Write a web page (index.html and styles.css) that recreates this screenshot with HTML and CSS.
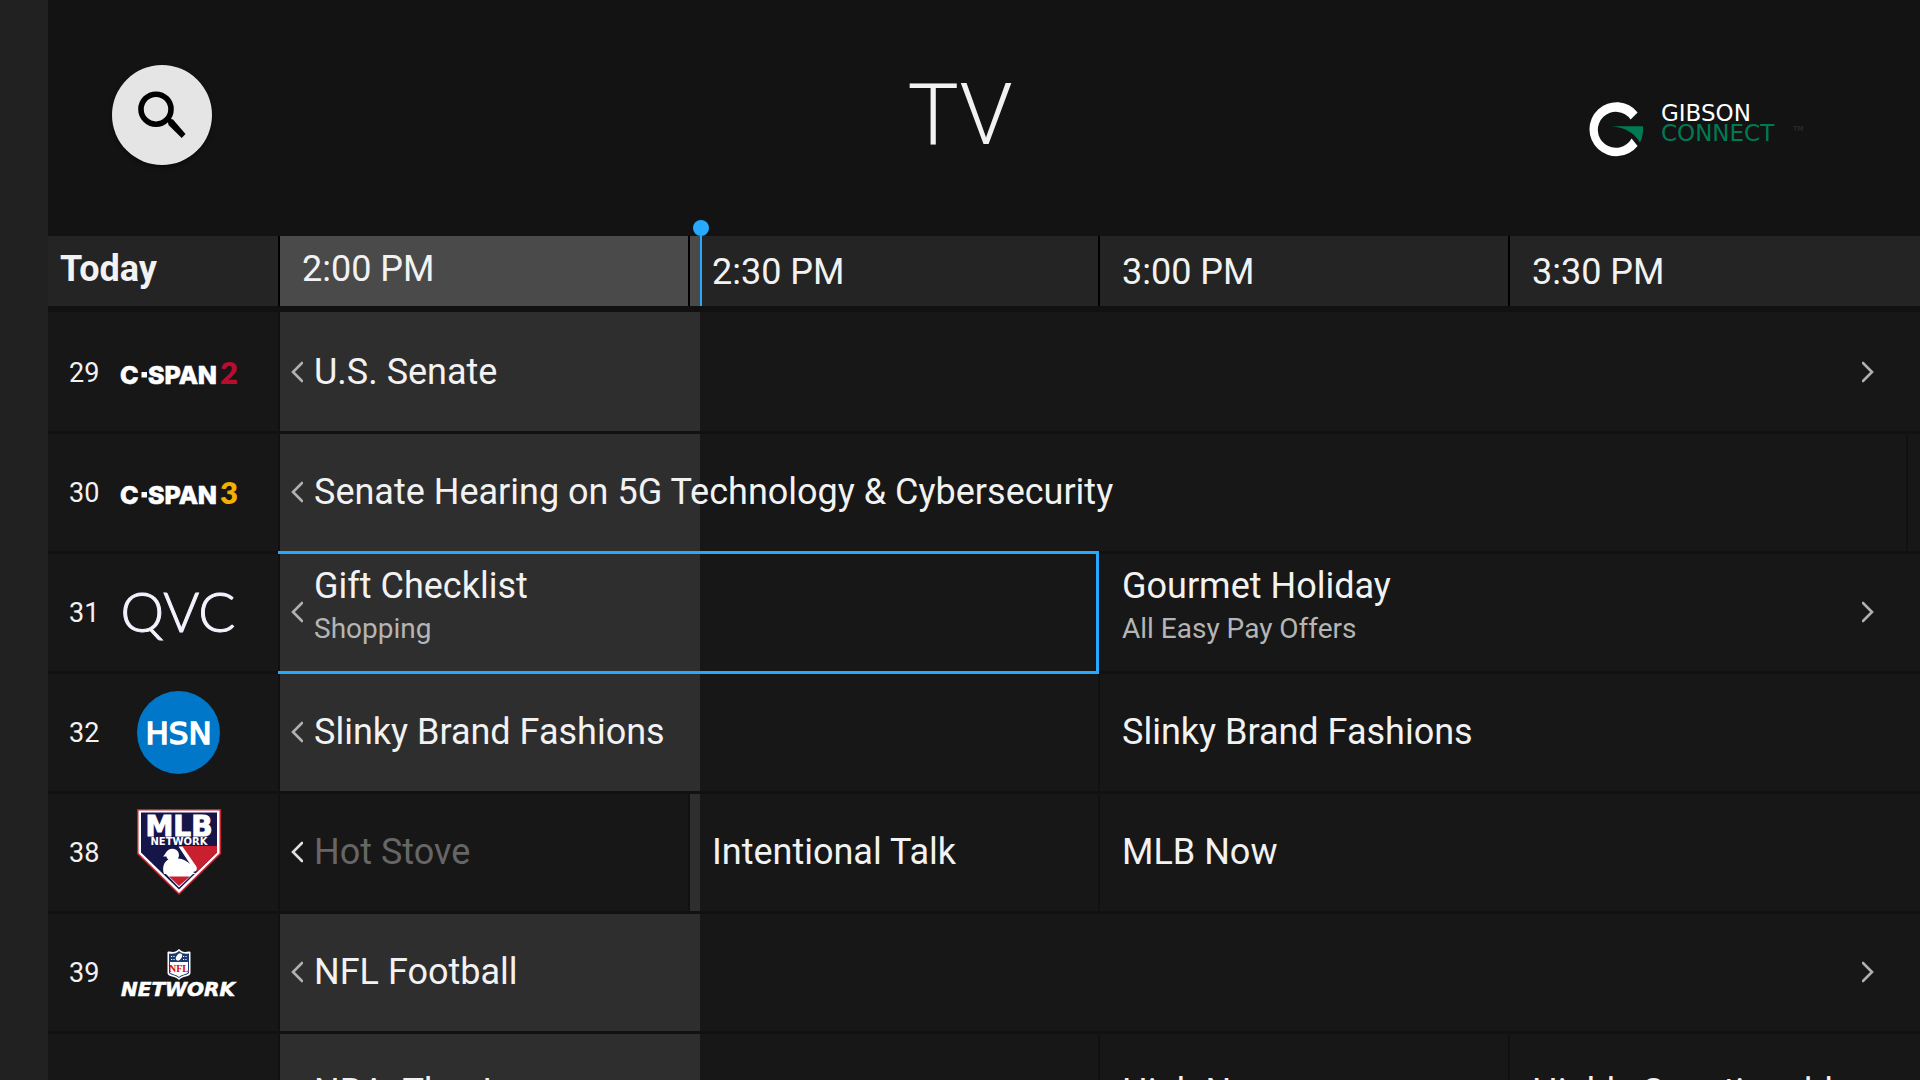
FILE: index.html
```html
<!DOCTYPE html>
<html lang="en">
<head>
    <meta charset="utf-8">
    <title>TV Guide</title>
    <link rel="stylesheet" href="styles.css">
</head>
<body>
    <svg class="sprite" aria-hidden="true">
        <symbol id="chevron-left" viewBox="0 0 12 22">
            <path d="M11 2 L2 11 L11 20" fill="none" stroke="currentColor" stroke-width="2.6" stroke-linecap="round"/>
        </symbol>
        <symbol id="chevron-right" viewBox="0 0 12 22">
            <path d="M1 2 L10 11 L1 20" fill="none" stroke="currentColor" stroke-width="2.6" stroke-linecap="round"/>
        </symbol>
    </svg>

    <div class="app">
        <nav class="side-rail" aria-label="Menu"></nav>

        <main class="main">
            <!-- Header -->
            <header class="header">
                <button class="search-button" aria-label="Search">
                    <svg width="100" height="100" viewBox="0 0 100 100">
                        <circle cx="44" cy="44.2" r="15" fill="none" stroke="#000" stroke-width="5.6"/>
                        <path d="M55.500 55 L57.500 53.500 L61 54.500 L73.500 69 L69.700 73 L56.500 60 Z" fill="#000"/>
                    </svg>
                </button>
                <h1 class="title">TV</h1>
                <svg class="brand" width="220" height="100" viewBox="0 0 220 100" role="img" aria-label="Gibson Connect">
                    <path d="M49.6 47.4 A27 27 0 1 0 49.6 81 L43.6 73.5 A18 18 0 1 1 42.6 54.5 Z" fill="#fff"/>
                    <path d="M24 61.2 H55 C55.4 67.5 54.4 72.7 52 77.4 C46 67.5 37 62.5 24 61.2 Z" fill="#007a53"/>
                    <text class="brand-text" x="73" y="56" fill="#fff">GIBSON</text>
                    <text class="brand-text" x="73" y="76" fill="#007a53">CONNECT</text>
                    <text class="brand-mark" x="205" y="66" fill="#333">TM</text>
                </svg>
            </header>

            <!-- Guide -->
            <table class="guide">
                <colgroup>
                    <col class="channel-col">
                    <col span="4">
                </colgroup>
                <thead>
                    <tr>
                        <th class="time day" scope="col">Today</th>
                        <th class="time current" scope="col">2:00 PM</th>
                        <th class="time" scope="col">
                            <span class="elapsed" style="width: 2.4%"></span>
                            <span class="now-marker" style="left: 2.4%"></span>
                            <span class="time-label">2:30 PM</span>
                        </th>
                        <th class="time" scope="col">3:00 PM</th>
                        <th class="time" scope="col">3:30 PM</th>
                    </tr>
                </thead>
                <tbody>
                    <tr>
                        <th class="channel" scope="row">
                            <div class="channel-info">
                                <span class="number">29</span>
                                <svg class="logo" width="120" height="100" viewBox="0 1 120 100" role="img" aria-label="C-SPAN 2">
                                    <text class="cspan" x="1" y="62">C</text>
                                    <rect x="22.500" y="50" width="5.500" height="5.500" fill="#fff"/>
                                    <text class="cspan" x="29" y="62">SPAN</text>
                                    <text class="cspan-digit" x="101" y="62" fill="#ba0c2f">2</text>
                                </svg>
                            </div>
                        </th>
                        <td class="slot" colspan="4">
                            <span class="elapsed" style="width: 25.6%"></span>
                            <button class="show">
                                <svg class="chevron"><use href="#chevron-left"/></svg>
                                <span class="show-text">U.S. Senate</span>
                                <svg class="chevron more"><use href="#chevron-right"/></svg>
                            </button>
                        </td>
                    </tr>
                    <tr>
                        <th class="channel" scope="row">
                            <div class="channel-info">
                                <span class="number">30</span>
                                <svg class="logo" width="120" height="100" viewBox="0 1 120 100" role="img" aria-label="C-SPAN 3">
                                    <text class="cspan" x="1" y="62">C</text>
                                    <rect x="22.500" y="50" width="5.500" height="5.500" fill="#fff"/>
                                    <text class="cspan" x="29" y="62">SPAN</text>
                                    <text class="cspan-digit" x="101" y="62" fill="#f2b000">3</text>
                                </svg>
                            </div>
                        </th>
                        <td class="slot" colspan="4">
                            <span class="elapsed" style="width: 25.6%"></span>
                            <div class="split">
                                <button class="show">
                                    <svg class="chevron"><use href="#chevron-left"/></svg>
                                    <span class="show-text">Senate Hearing on 5G Technology &amp; Cybersecurity</span>
                                </button>
                                <span class="next-show"></span>
                            </div>
                        </td>
                    </tr>
                    <tr>
                        <th class="channel" scope="row">
                            <div class="channel-info">
                                <span class="number">31</span>
                                <svg class="logo" width="120" height="100" viewBox="0 1 120 100" role="img" aria-label="QVC">
                                    <text class="qvc" x="59" y="69.500">QVC</text>
                                </svg>
                            </div>
                        </th>
                        <td class="slot selected" colspan="2">
                            <span class="elapsed" style="width: 51.3%"></span>
                            <button class="show">
                                <svg class="chevron"><use href="#chevron-left"/></svg>
                                <span class="show-text detailed">Gift Checklist <small class="subtitle">Shopping</small></span>
                            </button>
                        </td>
                        <td class="slot" colspan="2">
                            <button class="show upcoming">
                                <span class="show-text detailed">Gourmet Holiday <small class="subtitle">All Easy Pay Offers</small></span>
                                <svg class="chevron more"><use href="#chevron-right"/></svg>
                            </button>
                        </td>
                    </tr>
                    <tr>
                        <th class="channel" scope="row">
                            <div class="channel-info">
                                <span class="number">32</span>
                                <svg class="logo" width="120" height="100" viewBox="0 1 120 100" role="img" aria-label="HSN">
                                    <circle cx="59.500" cy="50.500" r="41.500" fill="#0077c8"/>
                                    <text class="hsn" x="59.500" y="61.500">HSN</text>
                                </svg>
                            </div>
                        </th>
                        <td class="slot" colspan="2">
                            <span class="elapsed" style="width: 51.3%"></span>
                            <button class="show">
                                <svg class="chevron"><use href="#chevron-left"/></svg>
                                <span class="show-text">Slinky Brand Fashions</span>
                            </button>
                        </td>
                        <td class="slot" colspan="2">
                            <button class="show upcoming"><span class="show-text">Slinky Brand Fashions</span></button>
                        </td>
                    </tr>
                    <tr>
                        <th class="channel" scope="row">
                            <div class="channel-info">
                                <span class="number">38</span>
                                <svg class="logo" width="120" height="100" viewBox="0 1 120 100" role="img" aria-label="MLB Network">
                                    <path d="M18 7 H102 V52 L60 93 L18 52 Z" fill="#c8202f"/>
                                    <path d="M19.500 8.500 H100.500 V51.300 L60 91 L19.500 51.300 Z" fill="#fff"/>
                                    <path d="M22 10.500 H98 V50.500 L60 87.500 L22 50.500 Z" fill="#16154a"/>
                                    <path d="M62 44 H98 V50.500 L78 70 Z" fill="#c8202f"/>
                                    <path d="M59.500 44.500 H63.500 L77 64 C79 67 77 70 74 70 L77 72 H45 C43 66 44.500 60 49.500 57.500 C48 56.500 47.500 55.500 47.500 54.500 H44 C45.500 53 46 52 47 50.500 C49 46.500 54 45.500 57.500 48 C60.500 50.500 60.500 54 59 56.500 C64 56.500 69 60 71 62 Z" fill="#fff"/>
                                    <path d="M47 72 H74 L60 85.500 Z" fill="#fff"/>
                                    <path d="M50 74.500 H71 L60 84 Z" fill="#c8202f"/>
                                    <text class="mlb" x="60" y="34">MLB</text>
                                    <text class="mlb-network" x="60" y="43">NETWORK</text>
                                </svg>
                            </div>
                        </th>
                        <td class="slot">
                            <button class="show ended">
                                <svg class="chevron"><use href="#chevron-left"/></svg>
                                <span class="show-text">Hot Stove</span>
                            </button>
                        </td>
                        <td class="slot">
                            <span class="elapsed" style="width: 2.4%"></span>
                            <button class="show upcoming"><span class="show-text">Intentional Talk</span></button>
                        </td>
                        <td class="slot" colspan="2">
                            <button class="show upcoming"><span class="show-text">MLB Now</span></button>
                        </td>
                    </tr>
                    <tr>
                        <th class="channel" scope="row">
                            <div class="channel-info">
                                <span class="number">39</span>
                                <svg class="logo" width="120" height="100" viewBox="0 1 120 100" role="img" aria-label="NFL Network">
                                    <path d="M60 27 C62 29 64 30 66 30 C68 30 70 29 71.500 30 V51 C71.500 55 63 54 60 58 C57 54 48.500 55 48.500 51 V30 C50 29 52 30 54 30 C56 30 58 29 60 27 Z" fill="#fff"/>
                                    <path d="M60 29 C63 32 67 32 70 31.500 V50.500 C70 53 63 53 60 56 C57 53 50 53 50 50.500 V31.500 C53 32 57 32 60 29 Z" fill="#1b3a70"/>
                                    <path d="M51 40 H69 V50 C69 52 63 52 60 55 C57 52 51 52 51 50 Z" fill="#fff"/>
                                    <ellipse cx="60" cy="35" rx="2.500" ry="4" fill="#fff" transform="rotate(35 60 35)"/>
                                    <path d="M52 34.500 H56 M64 34.500 H68 M52 37.500 H56 M64 37.500 H68" stroke="#fff" stroke-width="1.200" stroke-dasharray="1.200 1.200"/>
                                    <text class="nfl" x="60" y="49.500">NFL</text>
                                    <text class="nfl-network" x="59" y="73.500">NETWORK</text>
                                </svg>
                            </div>
                        </th>
                        <td class="slot" colspan="4">
                            <span class="elapsed" style="width: 25.6%"></span>
                            <button class="show">
                                <svg class="chevron"><use href="#chevron-left"/></svg>
                                <span class="show-text">NFL Football</span>
                                <svg class="chevron more"><use href="#chevron-right"/></svg>
                            </button>
                        </td>
                    </tr>
                    <tr>
                        <th class="channel" scope="row"></th>
                        <td class="slot" colspan="2">
                            <span class="elapsed" style="width: 51.3%"></span>
                            <button class="show">
                                <svg class="chevron"><use href="#chevron-left"/></svg>
                                <span class="show-text">NBA: The Jump</span>
                            </button>
                        </td>
                        <td class="slot">
                            <button class="show upcoming"><span class="show-text">High Noon</span></button>
                        </td>
                        <td class="slot">
                            <button class="show upcoming"><span class="show-text">Highly Questionable</span></button>
                        </td>
                    </tr>
                </tbody>
            </table>
        </main>
    </div>
</body>
</html>
```
FILE: styles.css
```css
/* Global Styles */
* {
    box-sizing: border-box;
}

body {
    margin: 0;
    background-color: #131313;
    color: #f2f2f2;
    font-family: Roboto, sans-serif;
}

button {
    border: none;
    padding: 0;
    background: none;
    color: inherit;
    font: inherit;
    text-align: left;
    cursor: pointer;
}

.sprite {
    display: none;
}

/* Layout */
.app {
    display: flex;
    height: 100vh;
    overflow: hidden;
}

.side-rail {
    flex: 0 0 48px;
    background-color: #212121;
}

.main {
    flex: 1;
    min-width: 0;
}

/* Header */
.header {
    display: grid;
    grid-template-columns: 1fr auto 1fr;
    align-items: center;
    height: 236px;
    padding: 65px 112px 71px 64px;
}

.search-button {
    width: 100px;
    height: 100px;
    border-radius: 50%;
    background-color: #e5e5e5;
    box-shadow: 0 2px 4px rgba(0, 0, 0, 0.5);
}

.search-button svg {
    display: block;
}

.title {
    margin: 0;
    font-size: 86px;
    font-weight: 300;
    line-height: 100px;
}

.brand {
    justify-self: end;
}

.brand-text {
    font: 23px "DejaVu Sans", sans-serif;
}

.brand-mark {
    font: 7px "DejaVu Sans", sans-serif;
}

/* Guide */
.guide {
    width: 100%;
    table-layout: fixed;
    border-collapse: separate;
    border-spacing: 0;
}

.channel-col {
    width: 232px;
}

.guide th,
.guide td {
    position: relative;
    padding: 0;
    text-align: left;
}

/* Time bar */
.guide .time {
    height: 70px;
    padding-top: 2px;
    padding-left: 22px;
    border-right: 2px solid #000;
    background-color: #242424;
    font-size: 36px;
    font-weight: 400;
    line-height: 42px;
}

.guide .day,
.guide .current {
    padding-bottom: 6px;
}

.guide .day {
    padding-left: 12px;
    font-weight: 700;
}

.guide .current {
    background-color: #4a4a4a;
}

.elapsed {
    position: absolute;
    top: 0;
    bottom: 0;
    left: 0;
    background-color: #2e2e2e;
}

.time .elapsed {
    background-color: #4a4a4a;
}

.time-label {
    position: relative;
}

.now-marker {
    position: absolute;
    top: 0;
    bottom: 0;
    width: 2px;
    background-color: #26a9ff;
}

.now-marker::before {
    content: "";
    position: absolute;
    top: -16px;
    left: -7px;
    width: 16px;
    height: 16px;
    border-radius: 50%;
    background-color: #26a9ff;
}

/* Channels */
.guide .channel {
    height: 120px;
    border-right: 2px solid #111;
    border-bottom: 3px solid #111;
    background-color: #171717;
    font-weight: 400;
}

.channel-info {
    display: flex;
    align-items: center;
    gap: 19px;
    padding-left: 21px;
}

.number {
    width: 31px;
    font-size: 27px;
    line-height: 32px;
}

.logo {
    flex: none;
}

/* Shows */
.slot {
    border-right: 2px solid #111;
    border-bottom: 3px solid #111;
    background-color: #171717;
}

.guide tbody tr:first-child th,
.guide tbody tr:first-child td {
    padding-top: 2px;
    border-top: 6px solid #111;
}

.guide th:last-child,
.guide td:last-child {
    border-right: none;
}

.show {
    position: relative;
    display: flex;
    align-items: center;
    gap: 11px;
    width: 100%;
    height: 117px;
    padding-bottom: 2px;
    padding-left: 11px;
    font-size: 36px;
    line-height: 42px;
    white-space: nowrap;
}

.upcoming {
    padding-left: 22px;
}

.chevron {
    flex: none;
    width: 12px;
    height: 22px;
    color: #b0b0b0;
}

.more {
    margin-left: auto;
    margin-right: 46px;
}

.detailed {
    align-self: flex-start;
    padding-top: 11px;
}

.subtitle {
    display: block;
    margin-top: 5px;
    color: #b5b5b5;
    font-size: 28px;
    line-height: 33px;
}

.ended .show-text {
    color: #666;
}

.ended .chevron {
    color: #e0e0e0;
}

.split {
    display: flex;
}

.next-show {
    position: relative;
    flex: 0 0 14px;
    border-left: 2px solid #111;
}

/* Focus frame */
.selected::after {
    content: "";
    position: absolute;
    inset: -3px -1px -3px -2px;
    border: 3px solid #26a9ff;
    border-left: none;
    pointer-events: none;
}

/* Channel logos */
.cspan {
    fill: #fff;
    font: 800 25px Inter, sans-serif;
    stroke: #fff;
    stroke-width: 0.6px;
}

.cspan-digit {
    font: 800 31px Lato, sans-serif;
}

.qvc {
    fill: #f4f2ff;
    font: 300 55px Lato, sans-serif;
    text-anchor: middle;
    stroke: #f4f2ff;
    stroke-width: 1px;
}

.hsn {
    fill: #fff;
    font: 31px "DejaVu Sans", sans-serif;
    text-anchor: middle;
    stroke: #fff;
    stroke-width: 1.5px;
}

.mlb {
    fill: #fff;
    font: 700 28px "DejaVu Sans", sans-serif;
    text-anchor: middle;
    stroke: #fff;
    stroke-width: 1px;
}

.mlb-network {
    fill: #fff;
    font: 700 10px "DejaVu Sans", sans-serif;
    text-anchor: middle;
}

.nfl {
    fill: #d50a0a;
    font: 700 10px "Liberation Serif", serif;
    text-anchor: middle;
}

.nfl-network {
    fill: #fff;
    font: italic 700 20px "DejaVu Sans", sans-serif;
    text-anchor: middle;
    stroke: #fff;
    stroke-width: 0.6px;
}
```
